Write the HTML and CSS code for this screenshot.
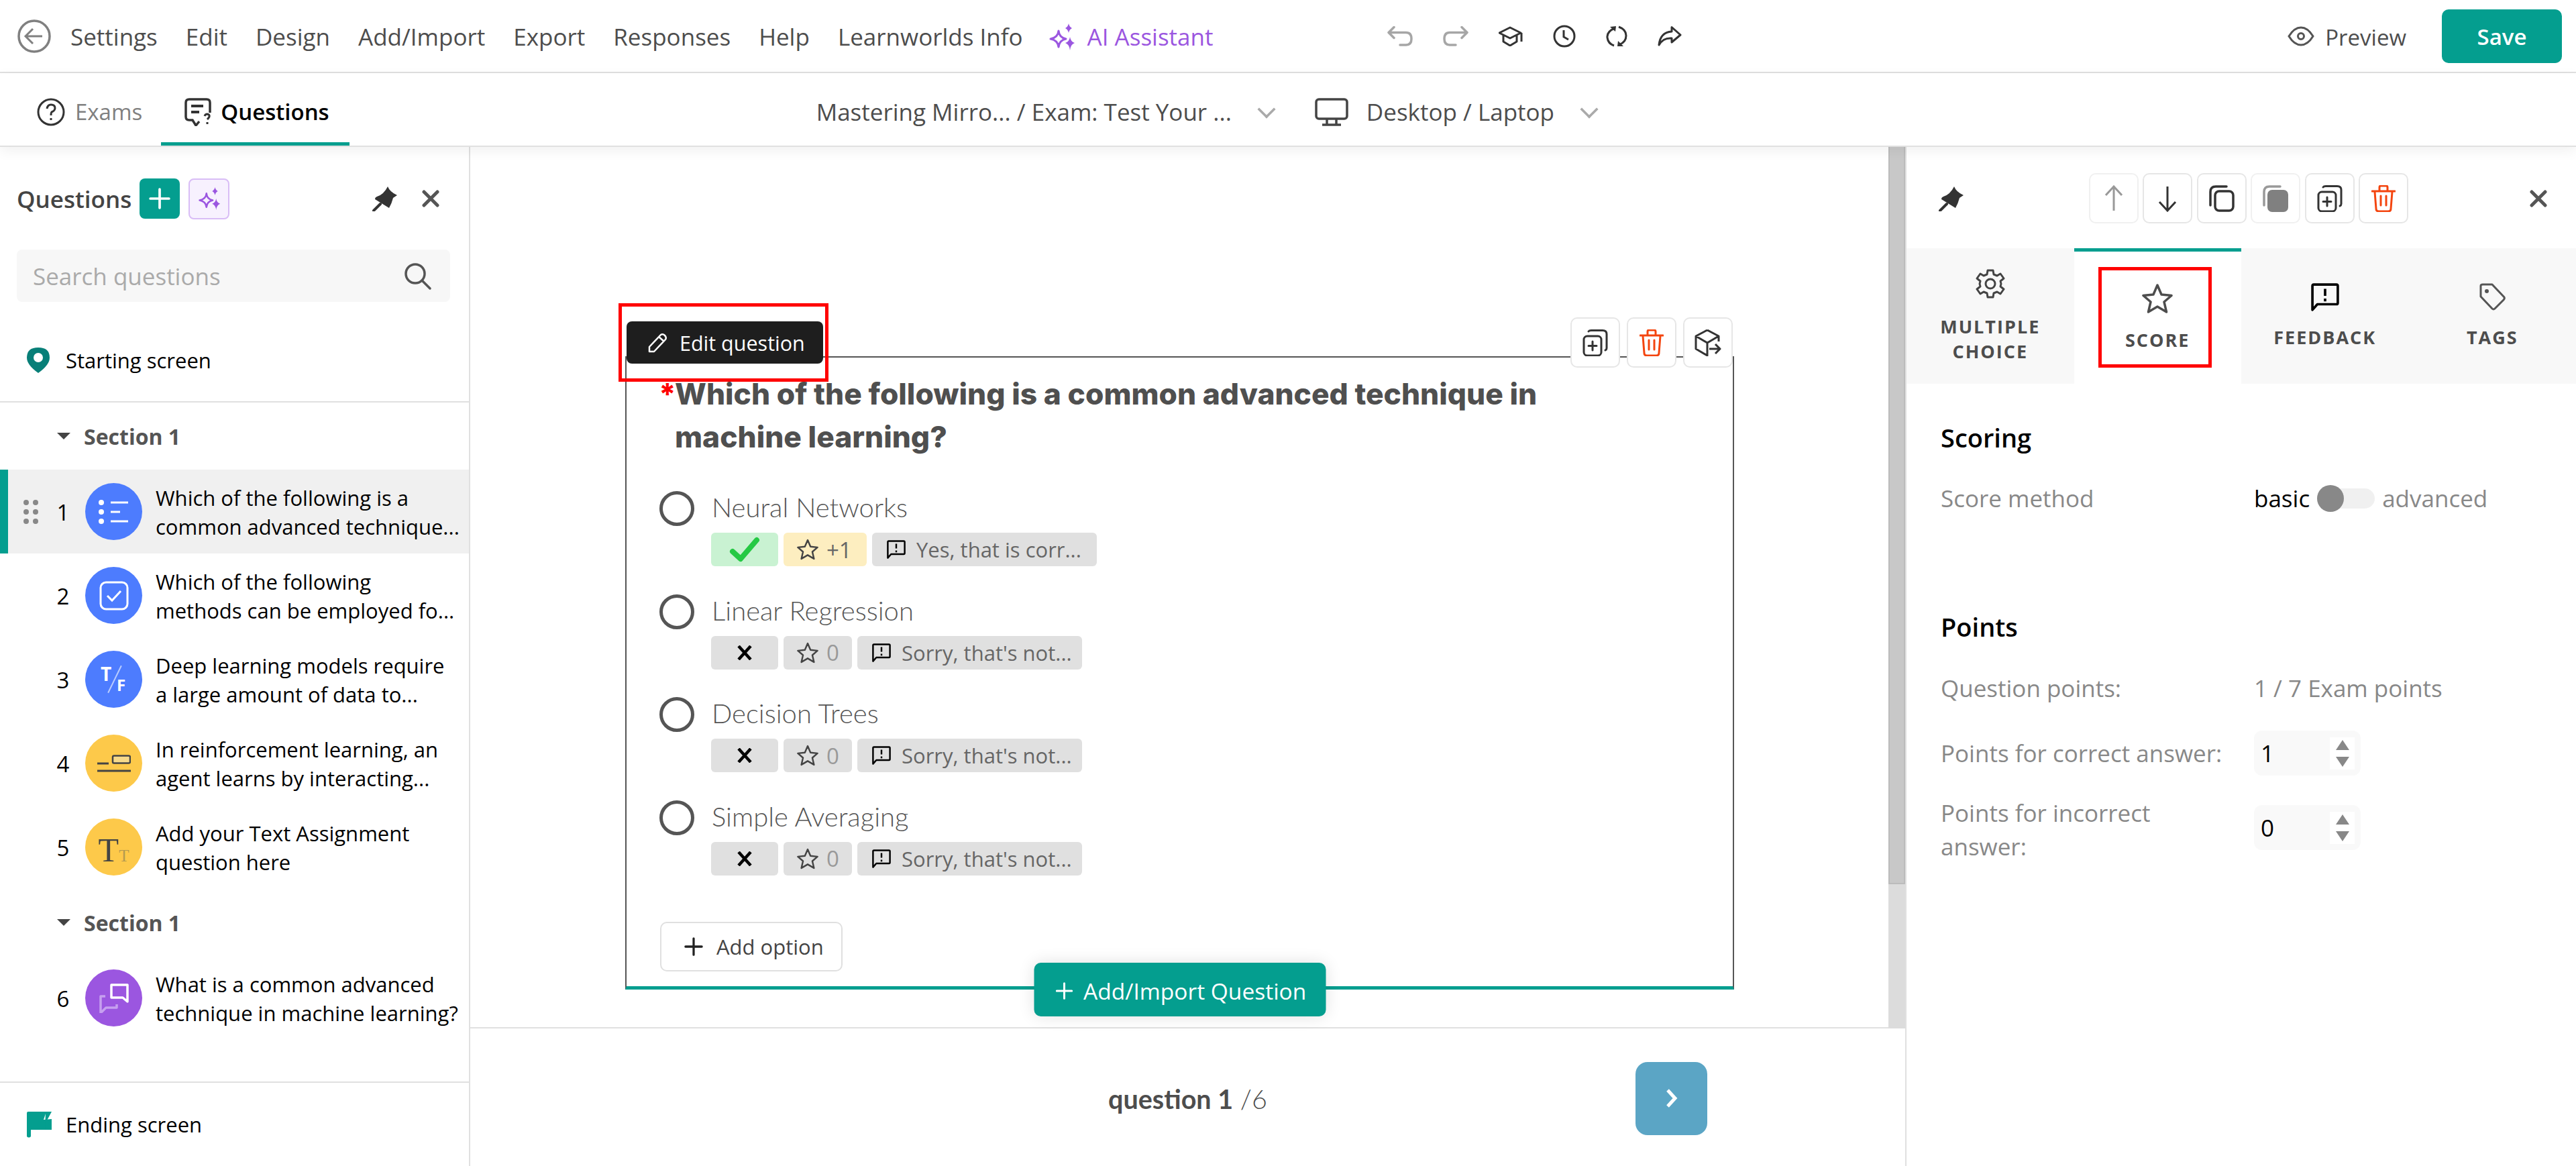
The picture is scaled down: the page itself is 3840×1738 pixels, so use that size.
FILE: index.html
```html
<!DOCTYPE html>
<html lang="en">
<head>
    <meta charset="UTF-8">
    <title>Exam editor</title>
    <link rel="stylesheet" href="styles.css">
</head>
<body>
    <svg class="defs" width="0" height="0">
        <defs>
            <symbol id="i-spark" viewBox="0 0 40 40">
                <path d="M15 11 Q16 21 26 23 Q16 25 15 35 Q14 25 3 23 Q14 21 15 11Z" fill="none" stroke="currentColor" stroke-width="3" stroke-linejoin="round"/>
                <path d="M30 0 Q31 5 35 7 Q31 9 30 14 Q29 9 25 7 Q29 5 30 0Z" fill="currentColor"/>
                <path d="M32 20 Q33 27 39 29 Q33 31 32 40 Q31 31 25 29 Q31 27 32 20Z" fill="currentColor"/>
            </symbol>
            <symbol id="i-pin" viewBox="0 0 38 38">
                <path d="M23 1 Q26 9 37 14 L31 18 Q29 26 25 33 L4 20 Q4 17 7 16 Q17 13 23 1Z" fill="#333"/>
                <path d="M12 27 L2 37" stroke="#333" stroke-width="4" stroke-linecap="round"/>
            </symbol>
            <symbol id="i-x" viewBox="0 0 28 26">
                <path d="M4 3 L24 23 M24 3 L4 23" stroke="#555" stroke-width="5" stroke-linecap="round"/>
            </symbol>
            <symbol id="i-trash" viewBox="0 0 36 40">
                <g fill="none" stroke="#f4450f" stroke-width="3" stroke-linecap="round" stroke-linejoin="round">
                    <path d="M1 9 H35 M12 9 V3 Q12 1 14 1 H22 Q24 1 24 3 V9 M5 10 L7 35 Q7 39 11 39 H25 Q29 39 29 35 L31 10 M14 16 V30 M22 16 V30"/>
                </g>
            </symbol>
            <symbol id="i-copyplus" viewBox="0 0 38 40">
                <g fill="none" stroke="#333" stroke-width="3" stroke-linecap="round">
                    <rect x="2" y="10" width="26" height="29" rx="5"/>
                    <path d="M9 3 Q10 1.500 13 1.500 H30 Q36 1.500 36 7 V28 Q36 30 34 31"/>
                    <path d="M15 18 V31 M9 24.500 H21"/>
                </g>
            </symbol>
            <symbol id="i-star" viewBox="0 0 46 46">
                <path d="M23 3 L29 17 L44 18.500 L33 28 L36.500 43 L23 35 L9.500 43 L13 28 L2 18.500 L17 17Z" fill="none" stroke="currentColor" stroke-width="3.500" stroke-linejoin="round"/>
            </symbol>
            <symbol id="i-fb" viewBox="0 0 40 40">
                <path d="M2 38 V4 Q2 2 4 2 H36 Q38 2 38 4 V28 Q38 30 36 30 H9 Z" fill="none" stroke="#000" stroke-width="3.500" stroke-linejoin="round"/>
                <path d="M20 8 V18 M20 22 V26" stroke="#000" stroke-width="3.500"/>
            </symbol>
            <symbol id="i-plus" viewBox="0 0 30 30">
                <path d="M15 2 V28 M2 15 H28" stroke="currentColor" stroke-width="3.500" stroke-linecap="round"/>
            </symbol>
            <symbol id="i-no" viewBox="0 0 22 22">
                <path d="M2 1 L20 21 M20 1 L2 21" stroke="#000" stroke-width="4.500"/>
            </symbol>
        </defs>
    </svg>

    <header class="topbar">
        <svg class="back" viewBox="0 0 50 50" width="50" height="50"><circle cx="25" cy="25" r="23" fill="none" stroke="#808080" stroke-width="3.500"/><path d="M37 25 H13 M23 14 L12 25 L23 36" fill="none" stroke="#808080" stroke-width="3"/></svg>
        <nav class="menu">
            <a>Settings</a>
            <a>Edit</a>
            <a>Design</a>
            <a>Add/Import</a>
            <a>Export</a>
            <a>Responses</a>
            <a>Help</a>
            <a>Learnworlds Info</a>
            <a class="menu-ai"><svg width="40" height="40"><use href="#i-spark"/></svg>AI Assistant</a>
        </nav>
        <div class="history">
            <svg width="38" height="30" viewBox="0 0 38 30"><path d="M10 1.500 L2 9.500 L10 17.500 M2 9.500 H28 Q36 9.500 36 19 Q36 28 28 28 H19" fill="none" stroke="#a6a6a6" stroke-width="3.500" stroke-linecap="round" stroke-linejoin="round"/></svg>
            <svg width="38" height="30" viewBox="0 0 38 30"><path d="M28 1.500 L36 9.500 L28 17.500 M36 9.500 H10 Q2 9.500 2 19 Q2 28 10 28 H19" fill="none" stroke="#a6a6a6" stroke-width="3.500" stroke-linecap="round" stroke-linejoin="round"/></svg>
            <svg width="36" height="30" viewBox="0 0 36 30"><path d="M1 10 L17 2 L33 10 L17 18Z M7 13 V23 L17 29 L27 23 V13 M34 10 V23" fill="none" stroke="#333" stroke-width="3" stroke-linejoin="round"/></svg>
            <svg width="34" height="34" viewBox="0 0 34 34"><circle cx="17" cy="17" r="15" fill="none" stroke="#333" stroke-width="3"/><path d="M16 8 V18 L23 22" fill="none" stroke="#333" stroke-width="3"/></svg>
            <svg width="32" height="32" viewBox="0 0 32 32"><path d="M13 4 Q1 9 2 18 Q3 27 12 30 M19 2 Q30 6 30 15 Q30 24 21 28" fill="none" stroke="#333" stroke-width="3"/><path d="M6 2 L15 1 L14 9Z M26 31 L17 31 L18 23Z" fill="#333"/></svg>
            <svg width="36" height="30" viewBox="0 0 36 30"><path d="M21 1.500 L34 13 L21 24 V18 Q8 17 2 28 Q4 9 21 8Z" fill="none" stroke="#333" stroke-width="3" stroke-linejoin="round"/></svg>
        </div>
        <div class="publish">
            <a class="preview"><svg width="40" height="30" viewBox="0 0 40 30"><path d="M2 15 Q10 2 20 2 Q30 2 38 15 Q30 28 20 28 Q10 28 2 15Z" fill="none" stroke="#555" stroke-width="3"/><circle cx="20" cy="15" r="4.500" fill="none" stroke="#555" stroke-width="3"/></svg><span>Preview</span></a>
            <button class="save">Save</button>
        </div>
    </header>

    <div class="tabbar">
        <div class="tabs">
            <a class="tab"><svg width="44" height="42" viewBox="0 0 44 42"><circle cx="22" cy="21" r="19" fill="none" stroke="#333" stroke-width="3"/><path d="M16 16 Q17 10 22 10 Q28 10 28 15 Q28 19 23 21 Q22 22 22 26 M22 30 V33" fill="none" stroke="#333" stroke-width="3"/></svg>Exams</a>
            <a class="tab tab-on"><svg width="40" height="42" viewBox="0 0 40 42"><path d="M22 35 L17 41 L12 33 H7 Q2 33 2 28 V7 Q2 2 7 2 H33 Q38 2 38 7 V22" fill="none" stroke="#333" stroke-width="3.500"/><path d="M10 12 H28 M10 21 H22" stroke="#333" stroke-width="4"/><path d="M30 27 Q31 24 34 24 Q38 25 37 28 Q36 30 34 32 M34 36 V39" fill="none" stroke="#333" stroke-width="3"/></svg>Questions</a>
        </div>
        <div class="pickers">
            <a class="picker picker-course">Mastering Mirro... / Exam: Test Your ...<i class="chev"></i></a>
            <a class="picker picker-device"><svg width="50" height="42" viewBox="0 0 50 42"><rect x="2" y="2" width="46" height="29" rx="4" fill="none" stroke="#444" stroke-width="3.500"/><path d="M18 32 V39 M32 32 V39 M11 40 H39" stroke="#444" stroke-width="3.500"/></svg>Desktop / Laptop<i class="chev"></i></a>
        </div>
    </div>

    <main class="workspace">
        <aside class="outline">
            <div class="outline-head">
                <span class="outline-title">Questions</span>
                <button class="add-q"><svg width="32" height="32"><use href="#i-plus"/></svg></button>
                <button class="ai-q"><svg width="34" height="34"><use href="#i-spark"/></svg></button>
                <svg class="outline-pin" width="38" height="38"><use href="#i-pin"/></svg>
                <svg class="outline-x" width="28" height="26"><use href="#i-x"/></svg>
            </div>
            <div class="search">
                <span>Search questions</span>
                <svg width="44" height="44" viewBox="0 0 44 44"><circle cx="19" cy="19" r="14" fill="none" stroke="#555" stroke-width="3.500"/><path d="M29 29 L41 41" stroke="#555" stroke-width="3.500" stroke-linecap="round"/></svg>
            </div>
            <div class="screen-row start-row">
                <svg width="34" height="38" viewBox="0 0 34 38"><path d="M17 38 Q0 26 0 15 Q0 0 17 0 Q34 0 34 15 Q34 26 17 38Z" fill="#087f78"/><circle cx="17" cy="15" r="7" fill="#fff"/></svg>
                Starting screen
            </div>

            <div class="section-head"><i class="caret"></i>Section 1</div>

            <div class="q-row q-row-on">
                <div class="drag"><i></i><i></i><i></i><i></i><i></i><i></i></div>
                <span class="q-num">1</span>
                <span class="q-type blue">
                    <svg width="46" height="36" viewBox="0 0 46 36"><circle cx="4" cy="4" r="4" fill="#fff"/><circle cx="4" cy="18" r="4" fill="#fff"/><circle cx="4" cy="32" r="4" fill="#fff"/><path d="M18 4 H44 M18 18 H32 M18 32 H44" stroke="#fff" stroke-width="3"/></svg>
                </span>
                <span class="q-text">Which of the following is a<br>common advanced technique...</span>
            </div>
            <div class="q-row">
                <div class="drag"></div>
                <span class="q-num">2</span>
                <span class="q-type blue">
                    <svg width="44" height="44" viewBox="0 0 44 44"><rect x="2" y="2" width="40" height="40" rx="8" fill="none" stroke="#fff" stroke-width="3"/><path d="M12 22 L19 29 L32 15" fill="none" stroke="#fff" stroke-width="3"/></svg>
                </span>
                <span class="q-text">Which of the following<br>methods can be employed fo...</span>
            </div>
            <div class="q-row">
                <div class="drag"></div>
                <span class="q-num">3</span>
                <span class="q-type blue tf-mark">
                    <span class="tf-t">T</span><i class="tf-slash"></i><span class="tf-f">F</span>
                </span>
                <span class="q-text">Deep learning models require<br>a large amount of data to...</span>
            </div>
            <div class="q-row">
                <div class="drag"></div>
                <span class="q-num">4</span>
                <span class="q-type yellow">
                    <svg width="50" height="26" viewBox="0 0 50 26"><path d="M0 13 H17 M0 24 H50" stroke="#444" stroke-width="3"/><rect x="23" y="1.500" width="26" height="11" rx="2" fill="#f6d98a" stroke="#444" stroke-width="2.500"/></svg>
                </span>
                <span class="q-text">In reinforcement learning, an<br>agent learns by interacting...</span>
            </div>
            <div class="q-row">
                <div class="drag"></div>
                <span class="q-num">5</span>
                <span class="q-type yellow tt-mark">
                    <span class="tt-big">T</span><span class="tt-small">T</span>
                </span>
                <span class="q-text">Add your Text Assignment<br>question here</span>
            </div>

            <div class="section-head"><i class="caret"></i>Section 1</div>

            <div class="q-row">
                <div class="drag"></div>
                <span class="q-num">6</span>
                <span class="q-type purple">
                    <svg width="44" height="44" viewBox="0 0 44 44"><path d="M18 2 H42 V27 L35 21 H18Z" fill="none" stroke="#fff" stroke-width="3.500" stroke-linejoin="round"/><path d="M9 19 H2 V44 L10 36 H26 V31" fill="none" stroke="#c6a0ef" stroke-width="3.500" stroke-linejoin="round"/></svg>
                </span>
                <span class="q-text">What is a common advanced<br>technique in machine learning?</span>
            </div>

            <div class="screen-row end-row">
                <svg width="38" height="40" viewBox="0 0 38 40"><path d="M1 3 Q1 1 3 1 H30 L26 13 L38 12 V28 H7 V38 Q4 41 1 38Z" fill="#049e8f"/><path d="M29 1 L38 1 L31 14 L38 28 H28Z" fill="#049e8f"/></svg>
                Ending screen
            </div>
        </aside>

        <section class="stage">
            <div class="stage-top">
                <div class="canvas">
                    <article class="card">
                        <button class="edit-q"><svg width="30" height="30" viewBox="0 0 30 30"><path d="M3 28 L3 21 L20 3 Q23 1 26 4 Q29 7 27 10 L10 28Z M17 6 L25 13" fill="none" stroke="#fff" stroke-width="2.500" stroke-linejoin="round"/></svg>Edit question</button>
                        <i class="mark mark-edit"></i>
                        <div class="card-tools">
                            <button class="tool"><svg width="38" height="40"><use href="#i-copyplus"/></svg></button>
                            <button class="tool"><svg width="36" height="40"><use href="#i-trash"/></svg></button>
                            <button class="tool"><svg width="40" height="40" viewBox="0 0 40 40"><path d="M19 1 L36 10 V18 M19 1 L2 10 V29 L19 39 V20 L2 10 M19 20 L36 10 M22 29 H38 M31 22 L38 29 L31 36" fill="none" stroke="#333" stroke-width="3" stroke-linejoin="round"/></svg></button>
                        </div>
                        <h2 class="q-title"><span class="req">*</span><span>Which of the following is a common advanced technique in machine learning?</span></h2>

                        <div class="option">
                            <i class="radio"></i>
                            <div class="option-body">
                                <div class="option-name">Neural Networks</div>
                                <div class="chips">
                                    <span class="chip chip-ok"><svg width="46" height="38" viewBox="0 0 46 38"><path d="M5 22 L17 33 L41 5" fill="none" stroke="#25c944" stroke-width="8" stroke-linecap="round" stroke-linejoin="round"/></svg></span>
                                    <span class="chip chip-score"><svg width="32" height="32"><use href="#i-star"/></svg><b>+1</b></span>
                                    <span class="chip chip-fb"><svg width="28" height="28"><use href="#i-fb"/></svg>Yes, that is corr...</span>
                                </div>
                            </div>
                        </div>
                        <div class="option">
                            <i class="radio"></i>
                            <div class="option-body">
                                <div class="option-name">Linear Regression</div>
                                <div class="chips">
                                    <span class="chip chip-no"><svg width="22" height="22"><use href="#i-no"/></svg></span>
                                    <span class="chip chip-zero"><svg width="32" height="32"><use href="#i-star"/></svg><b>0</b></span>
                                    <span class="chip chip-fb"><svg width="28" height="28"><use href="#i-fb"/></svg>Sorry, that's not...</span>
                                </div>
                            </div>
                        </div>
                        <div class="option">
                            <i class="radio"></i>
                            <div class="option-body">
                                <div class="option-name">Decision Trees</div>
                                <div class="chips">
                                    <span class="chip chip-no"><svg width="22" height="22"><use href="#i-no"/></svg></span>
                                    <span class="chip chip-zero"><svg width="32" height="32"><use href="#i-star"/></svg><b>0</b></span>
                                    <span class="chip chip-fb"><svg width="28" height="28"><use href="#i-fb"/></svg>Sorry, that's not...</span>
                                </div>
                            </div>
                        </div>
                        <div class="option">
                            <i class="radio"></i>
                            <div class="option-body">
                                <div class="option-name">Simple Averaging</div>
                                <div class="chips">
                                    <span class="chip chip-no"><svg width="22" height="22"><use href="#i-no"/></svg></span>
                                    <span class="chip chip-zero"><svg width="32" height="32"><use href="#i-star"/></svg><b>0</b></span>
                                    <span class="chip chip-fb"><svg width="28" height="28"><use href="#i-fb"/></svg>Sorry, that's not...</span>
                                </div>
                            </div>
                        </div>

                        <button class="add-option"><svg width="28" height="28"><use href="#i-plus"/></svg>Add option</button>
                        <button class="add-import"><svg width="26" height="26"><use href="#i-plus"/></svg>Add/Import Question</button>
                    </article>
                </div>
                <div class="scrollbar"><div class="thumb"></div></div>
            </div>
            <footer class="pager">
                <span></span>
                <div class="count"><b>question 1</b> /6</div>
                <div class="pager-next">
                    <button class="next"><svg width="18" height="30" viewBox="0 0 18 30"><path d="M3 3 L14 15 L3 27" fill="none" stroke="#fff" stroke-width="5"/></svg></button>
                </div>
            </footer>
        </section>

        <aside class="inspector">
            <div class="inspector-head">
                <svg width="38" height="38"><use href="#i-pin"/></svg>
                <div class="tool-row">
                    <button class="tool tool-faded"><svg width="28" height="40" viewBox="0 0 28 40"><path d="M14 38 V3 M2 15 L14 2 L26 15" fill="none" stroke="#999" stroke-width="3"/></svg></button>
                    <button class="tool"><svg width="28" height="40" viewBox="0 0 28 40"><path d="M14 2 V37 M2 25 L14 38 L26 25" fill="none" stroke="#333" stroke-width="3"/></svg></button>
                    <button class="tool"><svg width="38" height="40" viewBox="0 0 38 40"><path d="M26 2 H10 Q2 2 2 10 V30" fill="none" stroke="#333" stroke-width="3.500" stroke-linecap="round"/><rect x="9" y="9" width="27" height="29" rx="6" fill="none" stroke="#333" stroke-width="3.500"/></svg></button>
                    <button class="tool tool-faded"><svg width="38" height="40" viewBox="0 0 38 40"><path d="M26 2 H10 Q2 2 2 10 V30" fill="none" stroke="#999" stroke-width="3.500" stroke-linecap="round"/><rect x="7" y="7" width="31" height="33" rx="7" fill="#808080"/></svg></button>
                    <button class="tool"><svg width="38" height="40"><use href="#i-copyplus"/></svg></button>
                    <button class="tool"><svg width="36" height="40"><use href="#i-trash"/></svg></button>
                </div>
                <svg class="inspector-x" width="28" height="26"><use href="#i-x"/></svg>
            </div>
            <div class="side-tabs">
                <a class="side-tab">
                    <svg width="44" height="44" viewBox="0 0 44 44"><path d="M18 2 H26 L27 8 L32 10 L37 7 L42 14 L37 18 L38 22 L37 26 L42 30 L37 37 L32 34 L27 36 L26 42 H18 L17 36 L12 34 L7 37 L2 30 L7 26 L6 22 L7 18 L2 14 L7 7 L12 10 L17 8Z" fill="none" stroke="#444" stroke-width="3" stroke-linejoin="round"/><circle cx="22" cy="22" r="7" fill="none" stroke="#444" stroke-width="3"/></svg>
                    <span class="side-tab-two">MULTIPLE<br>CHOICE</span>
                </a>
                <a class="side-tab side-tab-on">
                    <svg width="46" height="46"><use href="#i-star"/></svg>
                    SCORE
                    <i class="mark mark-score"></i>
                </a>
                <a class="side-tab">
                    <svg width="42" height="42"><use href="#i-fb"/></svg>
                    FEEDBACK
                </a>
                <a class="side-tab">
                    <svg width="42" height="42" viewBox="0 0 42 42"><path d="M4 4 Q4 2 7 2 H21 L39 21 Q40 23 38 25 L25 38 Q23 40 21 38 L4 20Z" fill="none" stroke="#555" stroke-width="3" stroke-linejoin="round"/><circle cx="13" cy="12" r="3" fill="#555"/></svg>
                    TAGS
                </a>
            </div>
            <div class="inspector-body">
                <h3>Scoring</h3>
                <div class="field field-method">
                    <span class="field-label">Score method</span>
                    <div class="switch-line">
                        <span class="on-label">basic</span>
                        <span class="switch"><i></i></span>
                        <span>advanced</span>
                    </div>
                </div>
                <h3 class="points-head">Points</h3>
                <div class="field field-points">
                    <span class="field-label">Question points:</span>
                    <span>1 / 7 Exam points</span>
                </div>
                <div class="field field-correct">
                    <span class="field-label">Points for correct answer:</span>
                    <div class="stepper"><span>1</span><div class="spin"><i class="up"></i><i class="down"></i></div></div>
                </div>
                <div class="field field-wrong">
                    <span class="field-label">Points for incorrect answer:</span>
                    <div class="stepper"><span>0</span><div class="spin"><i class="up"></i><i class="down"></i></div></div>
                </div>
            </div>
        </aside>
    </main>
</body>
</html>
```

FILE: styles.css
```css
* {
    box-sizing: border-box;
}
html, body {
    margin: 0;
    height: 100%;
}
body {
    width: 3840px;
    height: 1738px;
    overflow: hidden;
    background-color: #fff;
    color: #4d4d4d;
    font-family: "Open Sans", sans-serif;
    font-size: 33px;
}
button {
    font-family: inherit;
    border: none;
    cursor: pointer;
}
.defs {
    position: absolute;
}
svg {
    flex: none;
    display: block;
}

/* top bar */
.topbar {
    display: flex;
    align-items: center;
    height: 109px;
    padding: 0 21px 0 26px;
    border-bottom: 2px solid #e0e0e0;
}
.menu {
    display: flex;
    align-items: center;
    gap: 42px;
    margin-left: 29px;
    padding-top: 2px;
    font-size: 35px;
    white-space: nowrap;
}
.menu-ai {
    display: flex;
    align-items: center;
    gap: 18px;
    margin-left: -4px;
    color: #9b56e0;
}
.history {
    display: flex;
    align-items: center;
    gap: 45px;
    margin-left: 260px;
}
.publish {
    display: flex;
    align-items: center;
    margin-left: auto;
}
.preview {
    display: flex;
    align-items: center;
    gap: 16px;
    font-size: 33px;
}
.preview span {
    padding-top: 3px;
}
.save {
    width: 179px;
    height: 80px;
    margin-left: 53px;
    padding-top: 3px;
    background-color: #049e8f;
    color: #fff;
    font-size: 33px;
    font-weight: 600;
    border-radius: 10px;
}

/* second bar */
.tabbar {
    position: relative;
    z-index: 2;
    display: flex;
    height: 110px;
    padding-left: 54px;
    border-bottom: 2px solid #e0e0e0;
    box-shadow: 0 6px 18px rgba(0,0,0,0.06);
    background-color: #fff;
}
.tabs {
    display: flex;
}
.tab {
    display: flex;
    align-items: center;
    gap: 14px;
    padding-top: 7px;
    color: #808080;
    font-size: 33px;
}
.tab-on {
    margin-left: 28px;
    padding: 12px 30px 0 35px;
    color: #000;
    font-weight: 600;
    border-bottom: 5px solid #049e8f;
}
.pickers {
    display: flex;
    align-items: center;
    margin-left: 696px;
    padding-top: 7px;
    font-size: 35px;
    white-space: nowrap;
}
.picker {
    display: flex;
    align-items: center;
}
.picker-device {
    margin-left: 64px;
}
.picker-device svg {
    margin-right: 27px;
}
.chev {
    width: 16px;
    height: 16px;
    margin: -8px 0 0 44px;
    border-right: 3px solid #aaa;
    border-bottom: 3px solid #aaa;
    transform: rotate(45deg) scale(1.2);
}

/* workspace */
.workspace {
    display: flex;
    height: 1519px;
}

/* left outline */
.outline {
    position: relative;
    flex: none;
    width: 701px;
    border-right: 2px solid #e0e0e0;
    color: #000;
}
.outline-head {
    display: flex;
    align-items: center;
    height: 153px;
    padding: 1px 0 0 25px;
}
.outline-title {
    color: #444;
    font-size: 35px;
    font-weight: 600;
}
.add-q {
    display: flex;
    align-items: center;
    justify-content: center;
    width: 60px;
    height: 60px;
    margin-left: 12px;
    padding: 0;
    color: #fff;
    background-color: #049e8f;
    border-radius: 8px;
}
.ai-q {
    display: flex;
    align-items: center;
    justify-content: center;
    width: 61px;
    height: 61px;
    margin-left: 13px;
    padding: 0;
    color: #9b56e0;
    background-color: #f7f1fe;
    border: 2px solid #d9bdf6;
    border-radius: 8px;
}
.outline-pin {
    margin-left: 213px;
}
.outline-x {
    margin-left: 35px;
}
.search {
    display: flex;
    align-items: center;
    justify-content: space-between;
    height: 78px;
    margin: 0 28px 0 25px;
    padding: 0 27px 0 24px;
    color: #aaa;
    background-color: #f7f7f7;
    font-size: 35px;
    border-radius: 8px;
}
.screen-row {
    display: flex;
    align-items: center;
    gap: 24px;
    font-size: 31px;
}
.start-row {
    height: 150px;
    padding: 26px 0 0 40px;
    border-bottom: 2px solid #e0e0e0;
}
.end-row {
    position: absolute;
    left: 0;
    right: 0;
    bottom: 0;
    height: 126px;
    padding-left: 39px;
    gap: 21px;
    border-top: 2px solid #e0e0e0;
}
.section-head {
    display: flex;
    align-items: center;
    height: 100px;
    padding-left: 85px;
    color: #555;
    font-size: 32px;
    font-weight: 700;
}
.caret {
    margin-right: 20px;
    border-left: 10px solid transparent;
    border-right: 10px solid transparent;
    border-top: 10px solid #444;
}
.q-row {
    display: flex;
    align-items: center;
    height: 125px;
    padding-left: 23px;
    border-left: 12px solid transparent;
}
.q-row-on {
    background-color: #f0f0f0;
    border-left-color: #049e8f;
}
.drag {
    display: grid;
    grid-template-columns: 8px 8px;
    gap: 6px;
    width: 22px;
}
.drag i {
    width: 8px;
    height: 8px;
    background-color: #888;
    border-radius: 50%;
}
.q-num {
    width: 48px;
    margin-left: 13px;
    padding-top: 2px;
    text-align: center;
    font-size: 33px;
}
.q-type {
    position: relative;
    flex: none;
    display: flex;
    align-items: center;
    justify-content: center;
    width: 85px;
    height: 85px;
    margin: 0 20px 0 9px;
    border-radius: 50%;
}
.blue {
    background-color: #4d7cfe;
}
.yellow {
    background-color: #fdc94a;
}
.purple {
    background-color: #9b56e0;
}
.tf-t, .tf-f {
    position: absolute;
    color: #fff;
    font-weight: 700;
    line-height: 1;
}
.tf-t {
    top: 20px;
    left: 23px;
    font-size: 28px;
}
.tf-f {
    top: 39px;
    left: 47px;
    font-size: 24px;
}
.tf-slash {
    position: absolute;
    top: 20px;
    left: 43px;
    width: 2px;
    height: 45px;
    background-color: #b9ccff;
    transform: rotate(26deg);
}
.tt-mark {
    align-items: baseline;
    line-height: 1;
    padding-top: 22px;
    font-family: "Liberation Serif", serif;
}
.tt-big {
    color: #444;
    font-size: 50px;
}
.tt-small {
    color: #b49a50;
    font-size: 25px;
}
.q-text {
    padding-top: 3px;
    font-size: 31px;
    line-height: 43.500px;
    white-space: nowrap;
}

/* middle */
.stage {
    flex: 1;
    display: flex;
    flex-direction: column;
    min-width: 0;
}
.stage-top {
    display: flex;
    height: 1314px;
}
.canvas {
    flex: 1;
    padding: 312px 0 0 231px;
    border-bottom: 2px solid #e0e0e0;
}
.scrollbar {
    width: 25px;
    background-color: #dcdcdc;
}
.thumb {
    height: 1099px;
    background-color: #c8c8c8;
    border: 2px solid #bbb;
    border-top: none;
}
.card {
    position: relative;
    width: 1653px;
    height: 944px;
    padding: 22px 0 0 49px;
    border: 2px solid #555;
    border-bottom: 5px solid #049e8f;
}
.edit-q {
    position: absolute;
    top: -54px;
    left: 0;
    display: flex;
    align-items: center;
    gap: 18px;
    width: 293px;
    height: 63px;
    padding: 0 0 0 31px;
    color: #fff;
    background-color: #1e1e1e;
    font-size: 30.500px;
    border-radius: 8px;
}
.mark {
    position: absolute;
    border: 5px solid #f00;
    z-index: 3;
}
.mark-edit {
    top: -81px;
    left: -12px;
    width: 313px;
    height: 117px;
}
.mark-score {
    top: 23px;
    left: 36px;
    width: 169px;
    height: 150px;
}
.tool {
    display: flex;
    align-items: center;
    justify-content: center;
    width: 74px;
    height: 75px;
    padding: 0;
    background-color: #fff;
    border: 2px solid #e6e6e6;
    border-radius: 10px;
}
.tool-faded {
    border-color: #f0f0f0;
}
.card-tools {
    position: absolute;
    top: -60px;
    right: 0;
    display: flex;
    gap: 10px;
}
.q-title {
    display: flex;
    margin: 0 0 49px 0;
    width: 1370px;
    color: #4f4f4f;
    font-family: Inter, sans-serif;
    font-size: 44.300px;
    font-weight: 800;
    line-height: 64px;
}
.req {
    flex: none;
    width: 24px;
    margin-left: -1px;
    color: #f00;
}
.option {
    display: flex;
    margin-bottom: 41.500px;
}
.radio {
    flex: none;
    width: 52px;
    height: 52px;
    margin-right: 25px;
    border: 5px solid #555;
    border-radius: 50%;
}
.option-name {
    height: 52px;
    margin: -2px 0 12px 0;
    padding-left: 1px;
    color: #555;
    font-family: Lato, sans-serif;
    font-size: 40px;
    font-weight: 300;
    line-height: 52px;
}
.chips {
    display: flex;
    gap: 8px;
}
.chip {
    display: flex;
    align-items: center;
    height: 50px;
    border-radius: 6px;
    white-space: nowrap;
}
.chip svg {
    color: #444;
}
.chip b {
    font-weight: 400;
}
.chip-ok {
    justify-content: center;
    width: 100px;
    background-color: #c9f2d2;
}
.chip-no {
    justify-content: center;
    width: 100px;
    background-color: #e0e0e0;
}
.chip-score {
    gap: 12px;
    width: 124px;
    padding-left: 20px;
    background-color: #fdeec0;
    color: #666;
}
.chip-zero {
    gap: 12px;
    width: 102px;
    padding-left: 20px;
    background-color: #e0e0e0;
    color: #999;
}
.chip-fb {
    gap: 16px;
    width: 335px;
    padding-left: 22px;
    background-color: #e0e0e0;
    color: #666;
    font-size: 31px;
}
.add-option {
    display: flex;
    align-items: center;
    gap: 20px;
    width: 272px;
    height: 74px;
    margin: 69px 0 0 1px;
    padding: 0 0 0 34px;
    color: #444;
    background-color: #fff;
    border: 2px solid #e0e0e0;
    border-radius: 10px;
    font-size: 31px;
}
.add-option svg {
    color: #222;
}
.add-import {
    position: absolute;
    left: 50%;
    bottom: -45px;
    transform: translateX(-50%);
    display: flex;
    align-items: center;
    gap: 16px;
    width: 435px;
    height: 80px;
    padding: 3px 0 0 32px;
    color: #fff;
    background-color: #049e8f;
    border-radius: 10px;
    font-size: 33.500px;
    white-space: nowrap;
    box-shadow: 0 0 24px rgba(0,0,0,0.12);
}
.pager {
    flex: 1;
    display: grid;
    grid-template-columns: 1fr auto 1fr;
    align-items: center;
    padding-top: 3px;
}
.count {
    font-family: Lato, sans-serif;
    font-size: 39.500px;
    font-weight: 300;
}
.count b {
    font-weight: 700;
}
.pager-next {
    display: flex;
    justify-content: flex-end;
    padding-right: 295px;
}
.next {
    display: flex;
    align-items: center;
    justify-content: center;
    width: 107px;
    height: 109px;
    background-color: #5ba5c5;
    border-radius: 18px;
}

/* right inspector */
.inspector {
    flex: none;
    width: 1000px;
    border-left: 2px solid #e0e0e0;
}
.inspector-head {
    display: flex;
    align-items: center;
    height: 151px;
    padding: 2px 42px 0 48px;
}
.tool-row {
    display: flex;
    gap: 6.400px;
    margin-left: 186px;
}
.inspector-x {
    margin-left: auto;
}
.side-tabs {
    display: grid;
    grid-template-columns: repeat(4, 1fr);
    height: 202px;
    background-color: #f8f8f8;
}
.side-tab {
    position: relative;
    display: flex;
    flex-direction: column;
    align-items: center;
    justify-content: center;
    gap: 20px;
    color: #4d4d4d;
    font-size: 27px;
    font-weight: 700;
    letter-spacing: 2px;
    line-height: 37px;
    text-align: center;
}
.side-tab-two {
    padding-top: 3px;
}
.side-tab-on {
    background-color: #fff;
    border-top: 5px solid #049e8f;
}
.inspector-body {
    padding: 55px 0 0 51px;
    color: #888;
    font-size: 35px;
}
.inspector-body h3 {
    margin: 0;
    color: #000;
    font-size: 38px;
    font-weight: 600;
    line-height: 50px;
}
.field {
    display: flex;
    align-items: center;
    line-height: 50px;
}
.field-label {
    flex: none;
    width: 467px;
}
.field-method {
    margin-top: 41px;
}
.switch-line {
    display: flex;
    align-items: center;
    gap: 11px;
}
.on-label {
    color: #000;
}
.switch {
    position: relative;
    width: 86px;
    height: 30px;
    background-color: #f0f0f0;
    border-radius: 15px;
}
.switch i {
    position: absolute;
    top: -5px;
    left: 0;
    width: 40px;
    height: 40px;
    background-color: #888;
    border-radius: 50%;
}
.inspector-body .points-head {
    margin-top: 141px;
}
.field-points {
    margin-top: 42px;
}
.field-correct {
    margin-top: 38px;
}
.field-correct .field-label {
    white-space: nowrap;
}
.field-wrong {
    margin-top: 31px;
}
.field-wrong .field-label {
    padding-right: 60px;
}
.stepper {
    display: flex;
    align-items: center;
    justify-content: space-between;
    width: 159px;
    height: 67px;
    padding: 0 9px 0 10px;
    color: #000;
    background-color: #f9f9f9;
    border-radius: 12px;
}
.field-wrong .stepper {
    margin-bottom: 7px;
}
.spin {
    display: flex;
    flex-direction: column;
    align-items: center;
    gap: 10px;
    width: 37px;
    padding: 4px 0;
    background-color: #fff;
}
.spin .up {
    border-left: 10px solid transparent;
    border-right: 10px solid transparent;
    border-bottom: 15px solid #888;
}
.spin .down {
    border-left: 10px solid transparent;
    border-right: 10px solid transparent;
    border-top: 15px solid #888;
}
```
